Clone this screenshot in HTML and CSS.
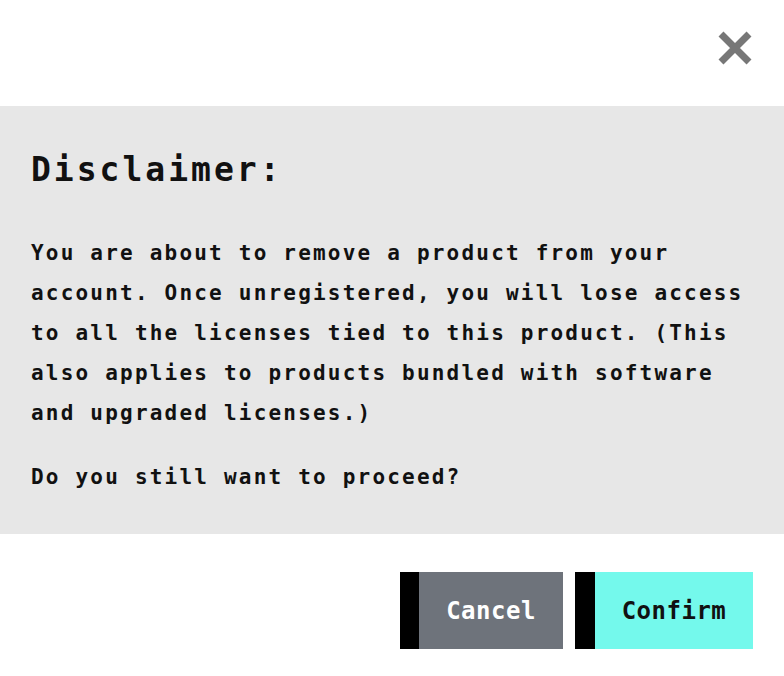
FILE: index.html
```html
<!DOCTYPE html>
<html>
  <head>
    <meta charset="utf-8" />
    <meta name="viewport" content="width=device-width, initial-scale=1" />
    <link rel="stylesheet" href="styles.css">
  </head>
  <body>
    <div class="modal">
      <div class="top">
        <button class="close" aria-label="Close">
          <svg width="34" height="34" viewBox="0 0 34 34">
            <path d="M3 3 L31 31 M31 3 L3 31" stroke="#777" stroke-width="7" fill="none"/>
          </svg>
        </button>
      </div>
      <div class="body">
        <h2>Disclaimer:</h2>
        <p>You are about to remove a product from your account. Once unregistered, you will lose access to all the licenses tied to this product. (This also applies to products bundled with software and upgraded licenses.)</p>
        <p class="ask">Do you still want to proceed?</p>
      </div>
      <div class="actions">
        <button class="btn cancel">Cancel</button>
        <button class="btn confirm">Confirm</button>
      </div>
    </div>
  </body>
</html>
```

FILE: styles.css
```css
body {
  margin: 0;
  background: #fff;
  font-family: "DejaVu Sans Mono", "Liberation Mono", monospace;
  font-weight: bold;
  color: #111;
}
.top {
  height: 106px;
  display: flex;
  justify-content: flex-end;
  align-items: flex-start;
}
.close {
  background: none;
  border: 0;
  padding: 0;
  margin: 31px 32px 0 0;
  width: 34px;
  height: 34px;
  cursor: pointer;
}
.close svg {
  display: block;
}
.body {
  background: #e7e7e7;
  padding: 44px 31px 37px;
}
.body h2 {
  margin: 0;
  font-size: 33px;
  line-height: 40px;
  letter-spacing: 3px;
  font-weight: bold;
}
.body p {
  margin: 43px 0 0;
  font-size: 21px;
  line-height: 40px;
  letter-spacing: 2.2px;
}
.body p.ask {
  margin-top: 24px;
}
.actions {
  display: flex;
  justify-content: flex-end;
  gap: 12px;
  padding: 38px 31px 0;
}
.btn {
  height: 77px;
  border: 0;
  border-left: 20px solid #000;
  font-family: inherit;
  font-weight: bold;
  font-size: 24px;
  letter-spacing: 0.5px;
  padding: 0;
  cursor: pointer;
}
.cancel {
  width: 163px;
  background: #6e737b;
  color: #fff;
  border-left-width: 19px;
}
.confirm {
  width: 178px;
  background: #74f9ec;
  color: #111;
}
```
